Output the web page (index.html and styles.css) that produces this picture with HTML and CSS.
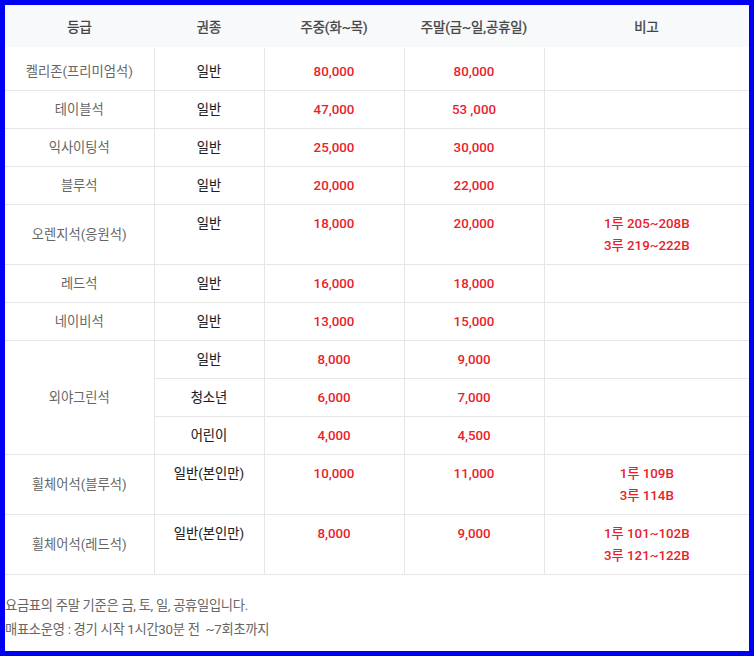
FILE: index.html
```html
<!DOCTYPE html>
<html lang="ko">
<head>
<meta charset="utf-8">
<title>요금표</title>
<link rel="stylesheet" href="styles.css">
</head>
<body>
<div class="frame">
  <table class="price">
    <colgroup>
      <col class="c1"><col class="c2"><col class="c3"><col class="c4"><col class="c5">
    </colgroup>
    <thead>
      <tr><th>등급</th><th>권종</th><th>주중(화~목)</th><th>주말(금~일,공휴일)</th><th>비고</th></tr>
    </thead>
    <tbody>
      <tr class="first"><td class="grade">켈리존(프리미엄석)</td><td class="kind">일반</td><td class="num">80,000</td><td class="num">80,000</td><td class="note"></td></tr>
      <tr><td class="grade">테이블석</td><td class="kind">일반</td><td class="num">47,000</td><td class="num">53 ,000</td><td class="note"></td></tr>
      <tr><td class="grade">익사이팅석</td><td class="kind">일반</td><td class="num">25,000</td><td class="num">30,000</td><td class="note"></td></tr>
      <tr><td class="grade">블루석</td><td class="kind">일반</td><td class="num">20,000</td><td class="num">22,000</td><td class="note"></td></tr>
      <tr><td class="grade">오렌지석(응원석)</td><td class="kind">일반</td><td class="num">18,000</td><td class="num">20,000</td><td class="note">1루 205~208B<br>3루 219~222B</td></tr>
      <tr><td class="grade">레드석</td><td class="kind">일반</td><td class="num">16,000</td><td class="num">18,000</td><td class="note"></td></tr>
      <tr><td class="grade">네이비석</td><td class="kind">일반</td><td class="num">13,000</td><td class="num">15,000</td><td class="note"></td></tr>
      <tr><td class="grade" rowspan="3">외야그린석</td><td class="kind">일반</td><td class="num">8,000</td><td class="num">9,000</td><td class="note"></td></tr>
      <tr><td class="kind">청소년</td><td class="num">6,000</td><td class="num">7,000</td><td class="note"></td></tr>
      <tr><td class="kind">어린이</td><td class="num">4,000</td><td class="num">4,500</td><td class="note"></td></tr>
      <tr><td class="grade">휠체어석(블루석)</td><td class="kind">일반(본인만)</td><td class="num">10,000</td><td class="num">11,000</td><td class="note">1루 109B<br>3루 114B</td></tr>
      <tr><td class="grade">휠체어석(레드석)</td><td class="kind">일반(본인만)</td><td class="num">8,000</td><td class="num">9,000</td><td class="note">1루 101~102B<br>3루 121~122B</td></tr>
    </tbody>
  </table>
  <div class="notes">
    <p>요금표의 주말 기준은 금, 토, 일, 공휴일입니다.</p>
    <p>매표소운영 : 경기 시작 1시간30분 전 &nbsp;~7회초까지</p>
  </div>
</div>
</body>
</html>
```
FILE: styles.css
```css
html, body {
  margin: 0;
  padding: 0;
}
body {
  font-family: Roboto, "Noto Sans CJK KR", sans-serif;
  font-size: 13.3px;
  background: #ffffff;
}
.frame {
  width: 754px;
  height: 656px;
  box-sizing: border-box;
  border: 5px solid #0000f5;
  background: #ffffff;
  overflow: hidden;
}
.price {
  width: 744px;
  table-layout: fixed;
  border-collapse: collapse;
}
.c1 { width: 149px; }
.c2 { width: 110px; }
.c3 { width: 140px; }
.c4 { width: 140px; }
.c5 { width: 205px; }
.price th {
  height: 42px;
  padding: 0;
  background: #f7f9fb;
  color: #444444;
  font-weight: 400;
  -webkit-text-stroke: 0.35px #444444;
  font-size: 13.3px;
  text-align: center;
  vertical-align: middle;
  border-bottom: 1px solid #ffffff;
}
.price td {
  padding: 8px 0 7px;
  line-height: 22px;
  text-align: center;
  vertical-align: top;
  border: 1px solid #e6e6e6;
  border-top: 0;
}
.price td:first-child { border-left: 0; }
.price td:last-child { border-right: 0; }
.price tr.first td { padding-top: 13px; }
.price td.grade {
  vertical-align: middle;
  color: #666666;
  font-weight: 400;
}
.price td.kind {
  color: #1e1e1e;
  font-weight: 400;
  -webkit-text-stroke: 0.12px #1e1e1e;
}
.price td.num,
.price td.note {
  color: #e8222c;
  font-weight: 500;
}
.price tr td.grade[rowspan] {
  border-left: 0;
}
.notes {
  margin-top: 19px;
  color: #666666;
  font-size: 13.3px;
  letter-spacing: -0.3px;
  line-height: 24px;
}
.notes p {
  margin: 0;
}
```
